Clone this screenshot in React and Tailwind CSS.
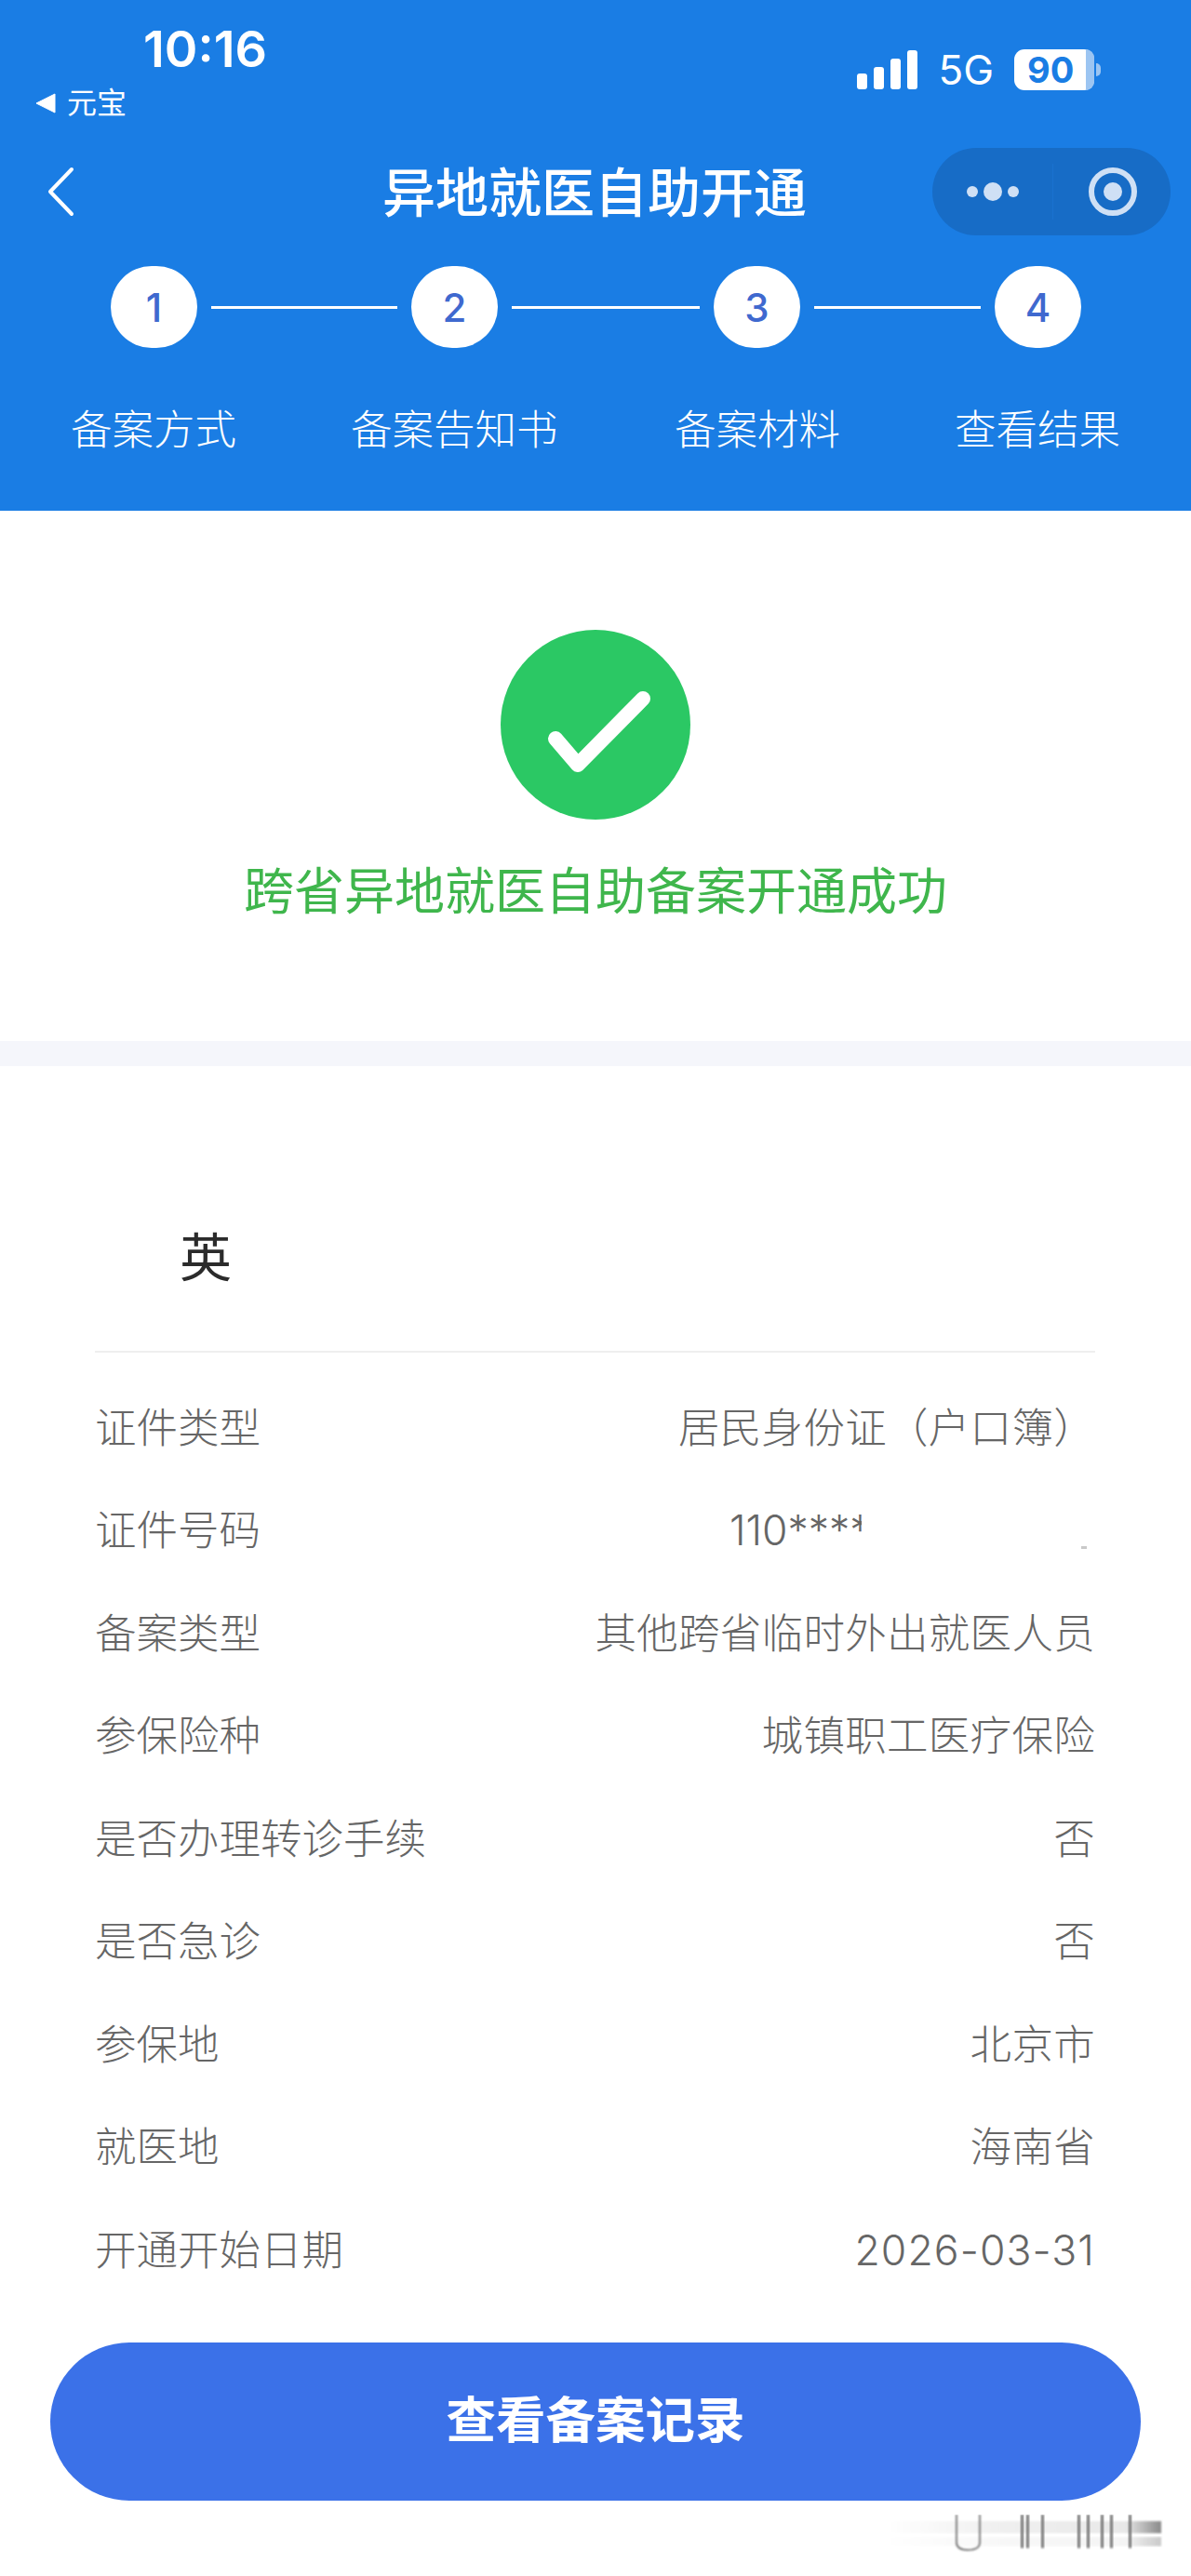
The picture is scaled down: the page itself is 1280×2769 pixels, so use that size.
const steps = [
  { num: "1", label: "备案方式" },
  { num: "2", label: "备案告知书" },
  { num: "3", label: "备案材料" },
  { num: "4", label: "查看结果" },
];

const rows = [
  ["证件类型", "居民身份证（户口簿）"],
  ["证件号码", null],
  ["备案类型", "其他跨省临时外出就医人员"],
  ["参保险种", "城镇职工医疗保险"],
  ["是否办理转诊手续", "否"],
  ["是否急诊", "否"],
  ["参保地", "北京市"],
  ["就医地", "海南省"],
  ["开通开始日期", "2026-03-31", "tracking-[1.1px]"],
];

const streaks = [147, 153, 169, 208, 218, 233, 243, 263];

const StepCircle = ({ num }) => (
  <div className="flex h-[88px] w-[93px] shrink-0 items-center justify-center rounded-full bg-white text-[42px] font-medium text-[#3f69cf] font-['Inter',sans-serif]">
    {num}
  </div>
);

const labelPos = ["left-[76px]", "left-[377px]", "left-[725px]", "left-[1026px]"];

const StepLabel = ({ index, label }) => (
  <span className={`absolute top-0 whitespace-nowrap ${labelPos[index]}`}>{label}</span>
);

const Header = () => (
  <header className="h-[549px] bg-[#1a7de4] text-white">
    {/* Status bar */}
    <div className="flex h-[134px] items-start justify-between pl-[38px] pr-[97px]">
      <div className="flex flex-col">
        <div className="ml-[116px] mt-[25px] text-[54px] leading-[56px] font-semibold font-['Inter',sans-serif]">10:16</div>
        <div className="mt-[12px] flex items-center gap-[12px]">
          <svg width="22" height="22" viewBox="0 0 22 22">
            <path d="M21 1 V21 L1 11 Z" fill="white" stroke="white" strokeWidth="1" strokeLinejoin="round" />
          </svg>
          <span className="text-[32px] leading-[36px] font-normal">元宝</span>
        </div>
      </div>
      <div className="mt-[53px] flex items-center">
        <svg width="66" height="44" viewBox="0 0 66 44">
          <rect x="0" y="26" width="11" height="17" rx="3" fill="white" />
          <rect x="18" y="19" width="11" height="24" rx="3" fill="white" />
          <rect x="36" y="10" width="11" height="33" rx="3" fill="white" />
          <rect x="54" y="1" width="11" height="42" rx="3" fill="white" />
        </svg>
        <span className="ml-[21px] text-[44px] leading-[44px] font-normal font-['Inter',sans-serif]">5G</span>
        <div className="relative ml-[22px] flex h-[44px] w-[86px] items-center rounded-[11px] bg-white pl-[14px]">
          <span className="text-[38px] leading-[44px] font-bold text-[#1a7de4] font-['Inter',sans-serif]">90</span>
          <div className="absolute inset-y-0 right-0 w-[9px] rounded-r-[11px] bg-[#9cc5f2]"></div>
        </div>
        <div className="ml-[2px] h-[14px] w-[5px] rounded-r-full bg-[#9cc5f2]"></div>
      </div>
    </div>

    {/* Title row */}
    <div className="relative flex h-[142px] items-start justify-center">
      <svg className="absolute left-[49px] top-[45px]" width="32" height="54" viewBox="0 0 32 54" fill="none">
        <path d="M28 3 L5 27 L28 51" stroke="white" strokeWidth="4" strokeLinecap="round" strokeLinejoin="round" />
      </svg>
      <h1 className="mt-[36px] ml-[-2px] text-[57px] leading-[66px] font-medium font-['Noto_Sans_CJK_SC',sans-serif]">异地就医自助开通</h1>
      <div className="absolute left-[1002px] top-[25px] flex h-[94px] w-[256px] items-center rounded-full bg-[#176cc6]">
        <div className="flex w-[129px] items-center justify-end gap-[6px] pr-[36px]">
          <div className="h-[12px] w-[12px] rounded-full bg-[#cfe0f5]"></div>
          <div className="h-[20px] w-[20px] rounded-full bg-[#cfe0f5]"></div>
          <div className="h-[12px] w-[12px] rounded-full bg-[#cfe0f5]"></div>
        </div>
        <div className="h-[60px] w-px bg-[#1a72cf]"></div>
        <div className="ml-[38px] flex h-[52px] w-[52px] items-center justify-center rounded-full border-[6px] border-[#cfe0f5]">
          <div className="h-[20px] w-[20px] rounded-full bg-[#cfe0f5]"></div>
        </div>
      </div>
    </div>

    {/* Steps */}
    <div className="mt-[10px] flex items-center pl-[119px]">
      <StepCircle num="1" />
      <div className="mx-[15px] h-[3px] w-[200px] bg-white"></div>
      <StepCircle num="2" />
      <div className="mx-[15px] h-[3px] w-[202px] bg-white"></div>
      <StepCircle num="3" />
      <div className="mx-[15px] h-[3px] w-[179px] bg-white"></div>
      <StepCircle num="4" />
    </div>
    <div className="relative mt-[55px] h-[60px] text-[44.5px] leading-[60px] font-['Noto_Sans_CJK_SC',sans-serif] font-light">
      {steps.map((s, i) => (
        <StepLabel key={s.num} index={i} label={s.label} />
      ))}
    </div>
  </header>
);

const Row = ({ label, value, valueClass = "tracking-[0.3px]" }) => (
  <div className="flex h-[110.5px] items-center justify-between text-[44.5px] text-[#666666]">
    <span>{label}</span>
    {value === null ? (
      <div className="flex w-[393px] items-end">
        <span className="w-[142px] overflow-hidden whitespace-nowrap font-['Inter',sans-serif] font-light">110****</span>
        <span className="ml-auto mb-[14px] mr-[9px] h-[3px] w-[6px] bg-[#c9c9c9]"></span>
      </div>
    ) : (
      <span className={valueClass}>{value}</span>
    )}
  </div>
);

// blurred leftover of a watermark under the button
const Smudge = () => (
  <svg width="300" height="42" viewBox="0 0 300 42">
    <defs>
      <linearGradient id="smudge" x1="0" y1="0" x2="1" y2="0">
        <stop offset="0" stopColor="#ffffff" />
        <stop offset="0.4" stopColor="#f0f0f0" />
        <stop offset="0.87" stopColor="#e8e8e8" />
        <stop offset="1" stopColor="#8a8a8a" />
      </linearGradient>
      <filter id="soft">
        <feGaussianBlur stdDeviation="0.8" />
      </filter>
    </defs>
    <rect x="3" y="7" width="295" height="13" fill="url(#smudge)" filter="url(#soft)" />
    <rect x="3" y="24" width="295" height="10" fill="url(#smudge)" opacity="0.45" filter="url(#soft)" />
    <path d="M78 0 V30 Q78 38 90 38 Q103 38 103 30 V0" fill="none" stroke="#555555" strokeWidth="1.5" filter="url(#soft)" />
    {streaks.map((x) => (
      <rect key={x} x={x} y="0" width="3" height="36" fill="#777777" filter="url(#soft)" />
    ))}
  </svg>
);

const App = () => {
  return (
    <div className="h-[2769px] overflow-hidden bg-white font-['Inter','Noto_Sans_CJK_SC',sans-serif] font-light" lang="zh-CN">
      <Header />

      {/* Success */}
      <section className="flex h-[570px] flex-col items-center pt-[128px]">
        <svg width="204" height="204" viewBox="0 0 204 204">
          <circle cx="102" cy="102" r="102" fill="#2bc864" />
          <path d="M59 117 L83 145 L153 74" fill="none" stroke="white" strokeWidth="16" strokeLinecap="round" strokeLinejoin="round" />
        </svg>
        <div className="mt-[46px] text-[54px] leading-[64px] text-[#3fb64c] font-normal">跨省异地就医自助备案开通成功</div>
      </section>
      <div className="h-[27px] bg-[#f5f6fb]"></div>

      {/* Details */}
      <section className="pl-[102px] pr-[103px]">
        <div className="flex h-[308px] border-b-2 border-[#efefef] pl-[91px] pt-[171px]">
          <span className="text-[56px] leading-[70px] font-normal text-[#2b2b2b]">英</span>
        </div>
        <div className="pt-[26px]">
          {rows.map(([label, value, valueClass]) => (
            <Row key={label} label={label} value={value} valueClass={valueClass} />
          ))}
        </div>
      </section>

      <div className="mt-[43px] px-[54px]">
        <button className="flex h-[170px] w-full items-center justify-center rounded-full bg-[#3b71e8] text-[53.5px] font-bold text-white">
          查看备案记录
        </button>
      </div>
      <div className="mt-[15px] flex justify-end pr-[30px]">
        <Smudge />
      </div>
    </div>
  );
};

export default App;
